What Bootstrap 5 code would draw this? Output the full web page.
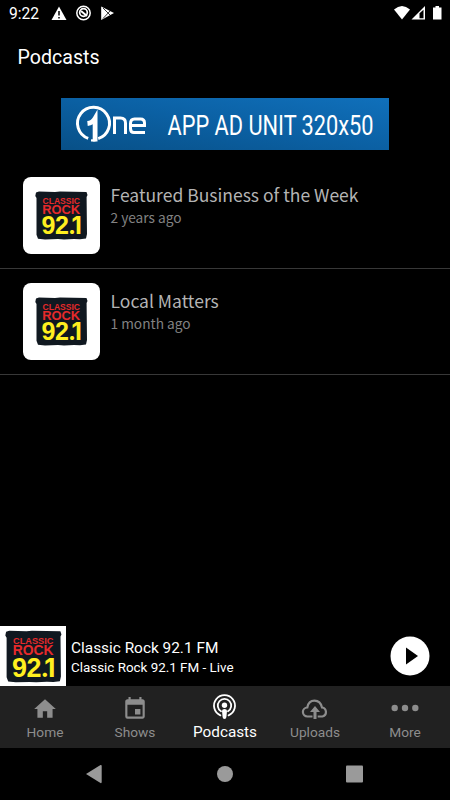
<!DOCTYPE html>
<html lang="en" data-bs-theme="dark">
<head>
<meta charset="utf-8">
<meta name="viewport" content="width=device-width, initial-scale=1">
<title>Podcasts</title>
<link href="https://cdn.jsdelivr.net/npm/bootstrap@5.3.0/dist/css/bootstrap.min.css" rel="stylesheet">
<style>
body{background:#000;color:#fff;font-family:Roboto,sans-serif;height:800px;overflow:hidden}
svg{display:block;flex:none}
.status-bar{height:28px;padding:0 8px 0 9px;font-size:15.6px;line-height:28px}
.notices{margin-left:9px}
.page-title{height:70px;padding:17px 17.5px 0;font-size:19.6px;line-height:26px}
.ad-unit{width:328px;height:52px;margin:0 auto 13px}
.show-row{height:106px;padding:14px 23px 0;gap:10.500px;border-bottom:1px solid #383838;font-family:"Noto Sans CJK SC",sans-serif}
.thumb{width:77px;height:77px;border-radius:8px;background:#fff;padding:14px 12px}
.show-name{font-size:17.5px;line-height:24px;margin-top:6px;color:#b4b4b4}
.show-age{font-size:13.7px;line-height:20px;color:#828282}
.player{height:60px;padding-right:20px}
.player-art{width:66px;height:60px;background:#fff;padding:4px 5px}
.track-info{padding:4px 0 0 5px}
.track{font-size:15.4px;line-height:19px}
.artist{font-size:13.4px;line-height:19px}
.station .call{font:700 9.1px "Liberation Sans",sans-serif;fill:#e62a2b}
.station .genre{font:700 13.3px "Liberation Sans",sans-serif;fill:#e62a2b}
.station .dial{font:700 25px "Liberation Sans",sans-serif;fill:#ffef1f}
.station .dial-end{font:700 24px Inter,sans-serif;fill:#ffef1f}
.tabs{height:62px;background:#212121}
.tab{width:90px;color:#8d8d8d;font-size:13.7px;line-height:18px;padding-top:10px}
.tab svg{height:26px;margin-bottom:1px}
.tab.active{color:#fff;font-size:15.3px;padding-top:8px}
.tab.active svg{margin-bottom:3px}
.sys{height:52px}
</style>
</head>
<body class="d-flex flex-column">
<header class="status-bar d-flex align-items-center">
  <span>9:22</span>
  <svg class="notices" width="66" height="28" viewBox="47 0 66 28">
    <path fill="#fff" d="M58 6.500L65.500 20h-15z"/><path stroke="#000" stroke-width="1.500" d="M58 11v4.500M58 17v1.600"/>
    <circle cx="82.500" cy="13" r="6.700" fill="none" stroke="#fff" stroke-width="1.500"/>
    <circle cx="82.500" cy="12.500" r="3.800" fill="none" stroke="#fff" stroke-width="1.700"/><path stroke="#fff" stroke-width="2" d="M80 11l6 5"/>
    <path fill="#fff" d="M100.200 6.500L113 13l-12.800 7z"/><path fill="none" stroke="#000" stroke-width=".8" d="M102 8l8 8M102 18.500l8-8.500"/>
  </svg>
  <svg class="ms-auto" width="50" height="28" viewBox="392 0 50 28">
    <path fill="#fff" d="M394 9.500q8-7 16 0L402 19.500z"/>
    <path fill="#fff" d="M411.500 19.500L425 6v13.500z"/><path fill="#000" d="M419.500 18.200v-5l4-3.500v8.500z"/>
    <path fill="#fff" d="M433 7.500h2.500V6h3.500v1.500h2.500v12H433z"/>
  </svg>
</header>

<h1 class="page-title fw-normal m-0">Podcasts</h1>

<div class="ad-unit">
  <svg width="328" height="52" viewBox="61 98 328 52">
    <defs><linearGradient id="sky" x1="0" y1="1" x2="1" y2="0"><stop stop-color="#085087"/><stop offset=".5" stop-color="#0b60a3"/><stop offset="1" stop-color="#1070bb"/></linearGradient></defs>
    <path fill="url(#sky)" d="M61 98h328v52H61z"/>
    <g fill="none" stroke="#fff">
      <path stroke-width="3" d="M88.200 138.400A16 16 0 1 1 98.200 138.600"/>
      <path stroke-width="4.800" d="M87.500 123.500q5-.5 7.600-5V141.500"/>
      <path stroke-width="2.200" d="M91 140.400h4.500"/>
      <path stroke-width="3" d="M114.500 134v-16h6q5 0 5 5v11M145 132.500H134q-3.500 0-3.500-4v-5q0-4.500 4-4.500h6q4 0 4 4v2.500h-14"/>
    </g>
    <text x="167.500" y="135" font-family="Roboto,sans-serif" font-size="28.500" fill="#fff" textLength="206" lengthAdjust="spacingAndGlyphs">APP AD UNIT 320x50</text>
  </svg>
</div>

<main class="flex-grow-1">
  <article class="show-row d-flex">
    <div class="thumb">
      <svg class="station" width="53" height="49" viewBox="0 0 53 49">
        <path fill="#101820" d="M1 1.500L4 .5 20 1l5-.4L51.500 1 52.500 4 51.600 6l.4 37-1 4.500-6 .8-6-.4-10 .6-6-.4-13 .4-7-.8-1.500-4L1.500 7 .3 5z"/>
        <text class="call" x="7.500" y="12.800" textLength="37.500" lengthAdjust="spacingAndGlyphs">CLASSIC</text>
        <text class="genre" x="7.200" y="22.800" textLength="38" lengthAdjust="spacingAndGlyphs">ROCK</text>
        <text class="dial" x="6.500 20" y="43.200">92</text>
        <text class="dial-end" x="33 36.500" y="43.200">.1</text>
      </svg>
    </div>
    <div><div class="show-name">Featured Business of the Week</div><div class="show-age">2 years ago</div></div>
  </article>
  <article class="show-row d-flex">
    <div class="thumb">
      <svg class="station" width="53" height="49" viewBox="0 0 53 49">
        <path fill="#101820" d="M1 1.500L4 .5 20 1l5-.4L51.500 1 52.500 4 51.600 6l.4 37-1 4.500-6 .8-6-.4-10 .6-6-.4-13 .4-7-.8-1.500-4L1.500 7 .3 5z"/>
        <text class="call" x="7.500" y="12.800" textLength="37.500" lengthAdjust="spacingAndGlyphs">CLASSIC</text>
        <text class="genre" x="7.200" y="22.800" textLength="38" lengthAdjust="spacingAndGlyphs">ROCK</text>
        <text class="dial" x="6.500 20" y="43.200">92</text>
        <text class="dial-end" x="33 36.500" y="43.200">.1</text>
      </svg>
    </div>
    <div><div class="show-name">Local Matters</div><div class="show-age">1 month ago</div></div>
  </article>
</main>

<section class="player d-flex align-items-center">
  <div class="player-art">
    <svg class="station" width="57" height="53" viewBox="0 0 53 49">
      <path fill="#101820" d="M1 1.500L4 .5 20 1l5-.4L51.500 1 52.500 4 51.600 6l.4 37-1 4.500-6 .8-6-.4-10 .6-6-.4-13 .4-7-.8-1.500-4L1.500 7 .3 5z"/>
      <text class="call" x="7.500" y="12.800" textLength="37.500" lengthAdjust="spacingAndGlyphs">CLASSIC</text>
      <text class="genre" x="7.200" y="22.800" textLength="38" lengthAdjust="spacingAndGlyphs">ROCK</text>
      <text class="dial" x="6.500 20" y="43.200">92</text>
      <text class="dial-end" x="33 36.500" y="43.200">.1</text>
    </svg>
  </div>
  <div class="track-info flex-grow-1"><div class="track">Classic Rock 92.1 FM</div><div class="artist">Classic Rock 92.1 FM - Live</div></div>
  <svg width="40" height="40"><circle cx="20" cy="20" r="19.500" fill="#fff"/><path d="M16 11.500L28 20 16 28.500z"/></svg>
</section>

<nav class="tabs d-flex">
  <div class="tab d-flex flex-column align-items-center"><svg width="26" viewBox="0 0 24 24" fill="currentColor"><path d="M10 20v-6h4v6h5v-8h3L12 3 2 12h3v8z"/></svg>Home</div>
  <div class="tab d-flex flex-column align-items-center"><svg width="26" viewBox="0 0 24 24" fill="currentColor"><path d="M17 12h-5v5h5v-5zM16 1v2H8V1H6v2H5c-1.100 0-2 .9-2 2v14a2 2 0 0 0 2 2h14c1.100 0 2-.9 2-2V5c0-1.100-.9-2-2-2h-1V1h-2zm3 18H5V8h14v11z"/></svg>Shows</div>
  <div class="tab active d-flex flex-column align-items-center"><svg width="26" viewBox="0 0 26 26"><g fill="none" stroke="currentColor" stroke-width="1.800" stroke-linecap="round"><path d="M8.400 21.300A10.500 10.500 0 1 1 16.600 21.300M9 17.300A6.700 6.700 0 1 1 16 17.300"/></g><circle cx="12.500" cy="11.300" r="2.700" fill="currentColor"/><path fill="currentColor" d="M10 17q0-2 2.500-2t2.500 2l-.6 6q-.2 2-1.900 2t-1.900-2z"/></svg>Podcasts</div>
  <div class="tab d-flex flex-column align-items-center"><svg width="28" viewBox="0 0 28 26"><path fill="none" stroke="currentColor" stroke-width="2.200" d="M11.500 20.500H6.500a4.500 4.500 0 0 1-.2-9Q7.500 4.600 13.500 4.600t7.500 6.900a4.600 4.600 0 0 1 .5 9h-4.800"/><path fill="currentColor" d="M14 10l5 6h-3.500v7h-3v-7H9z"/></svg>Uploads</div>
  <div class="tab d-flex flex-column align-items-center"><svg width="28" viewBox="0 0 28 26" fill="currentColor"><circle cx="3.700" cy="12" r="3.200"/><circle cx="14" cy="12" r="3.200"/><circle cx="24.300" cy="12" r="3.200"/></svg>More</div>
</nav>

<footer class="sys">
  <svg width="450" height="52" fill="#9a9a9a"><path d="M86 26l14.500-9q1.200-.5 1.200 1v16q0 1.500-1.200 1z"/><circle cx="225" cy="26" r="8"/><rect x="346" y="17.500" width="17" height="17" rx="1"/></svg>
</footer>
<script src="https://cdn.jsdelivr.net/npm/bootstrap@5.3.0/dist/js/bootstrap.bundle.min.js"></script>
</body>
</html>
